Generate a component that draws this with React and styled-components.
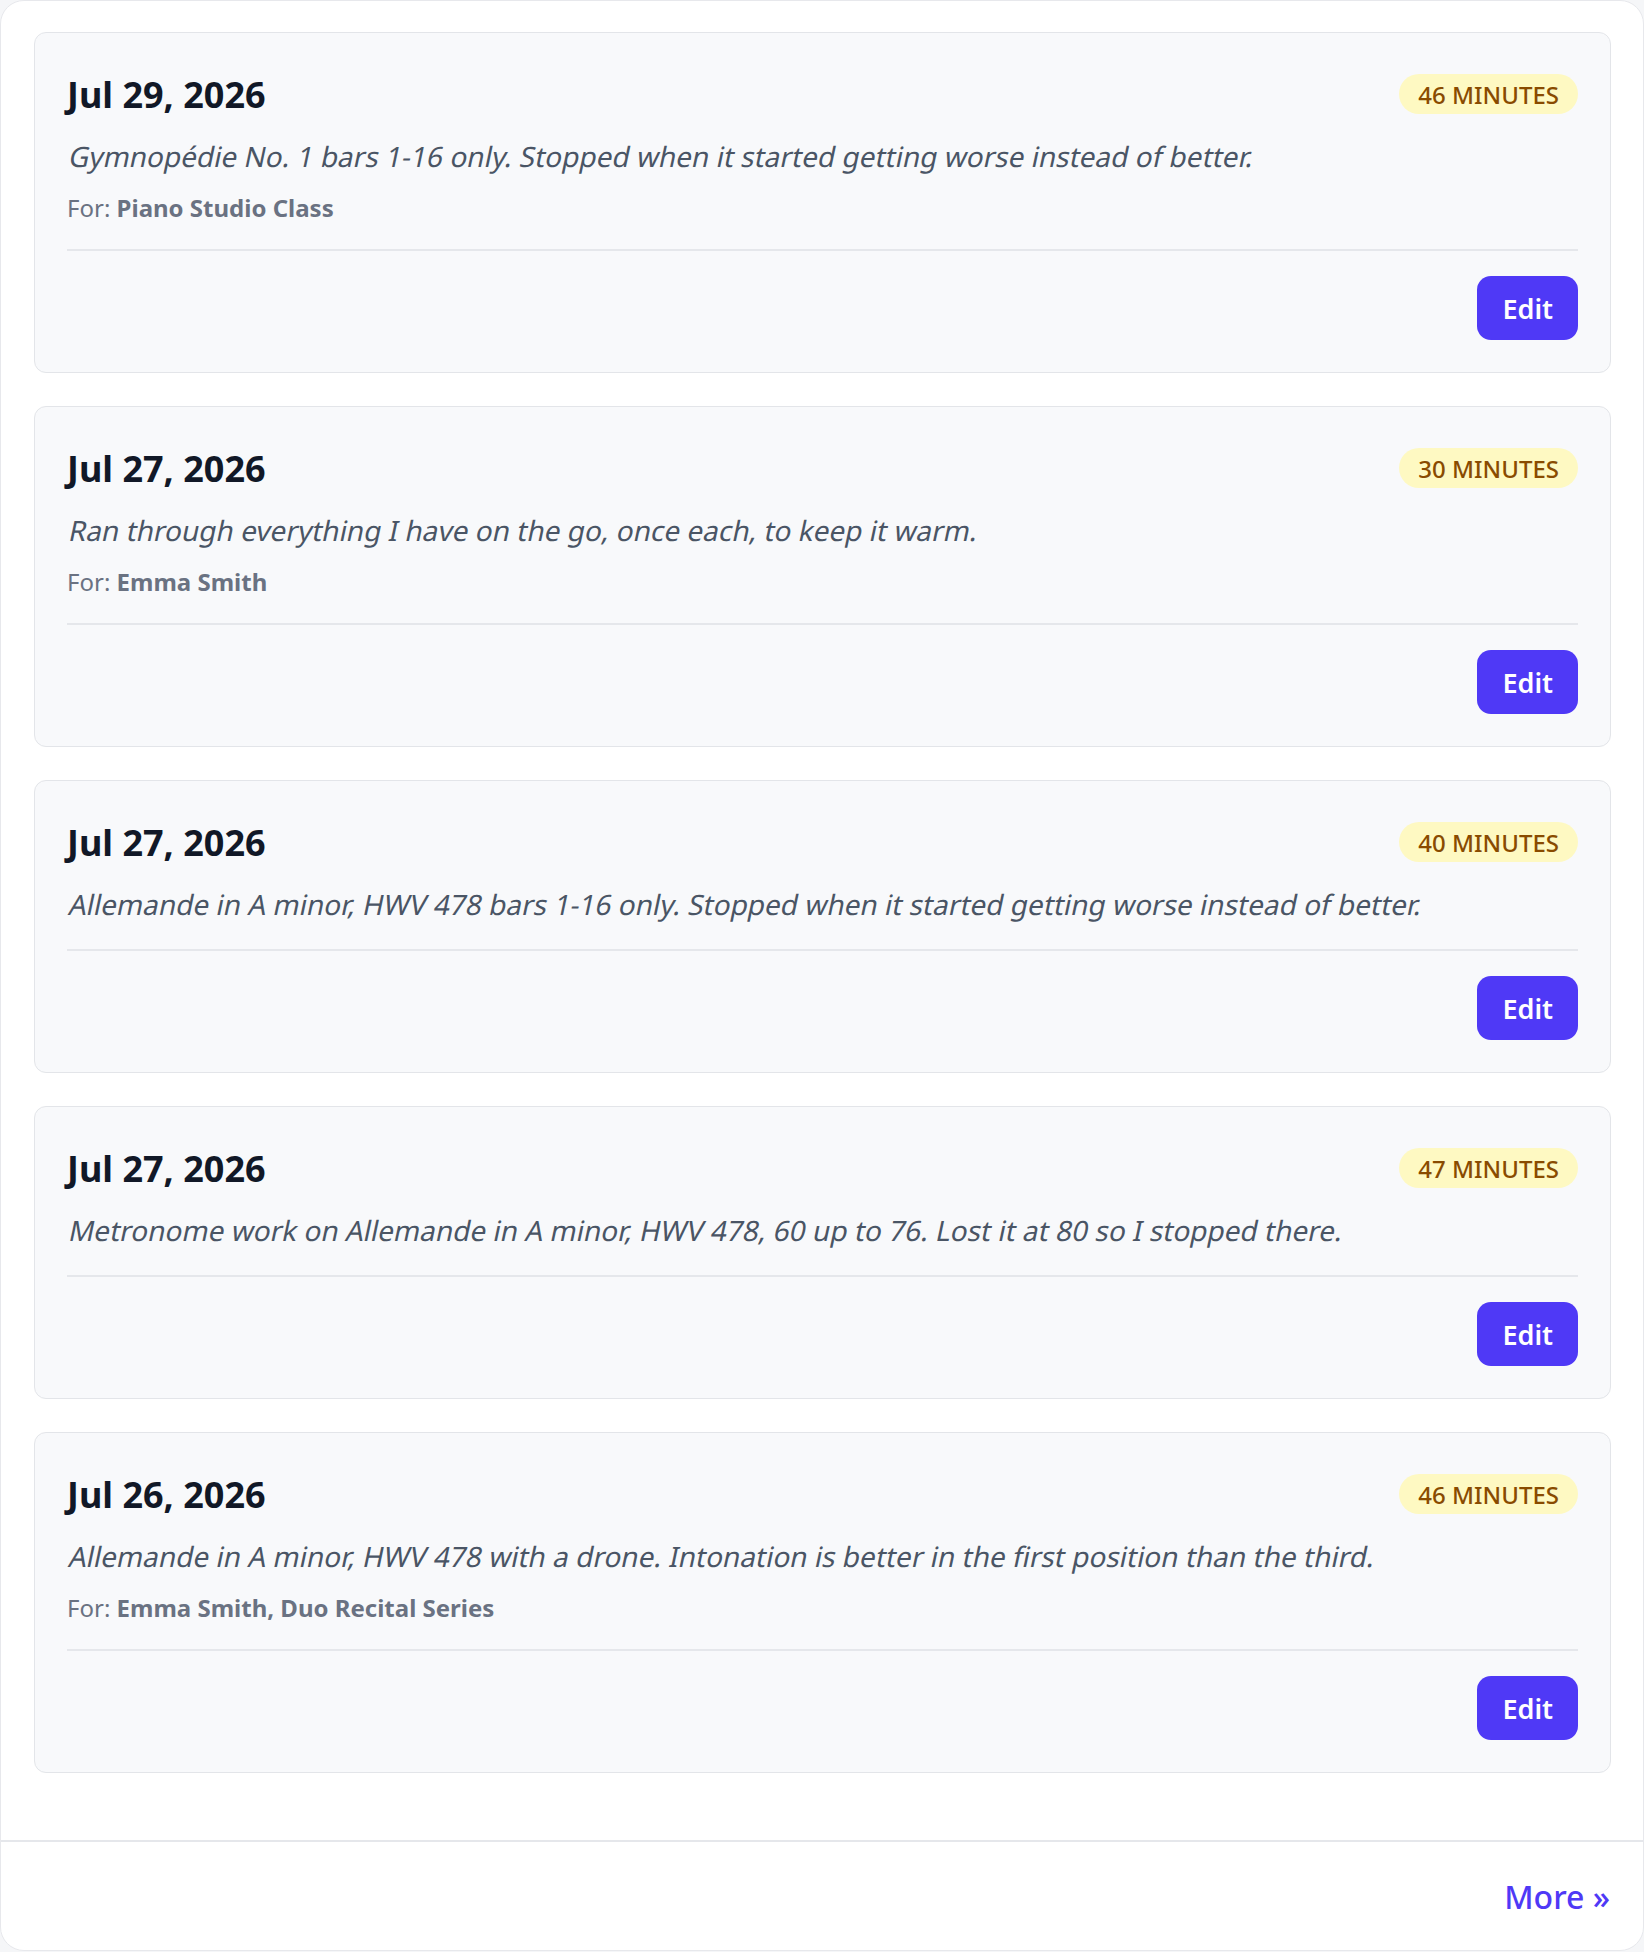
import styled, { createGlobalStyle } from 'styled-components';

const GlobalStyle = createGlobalStyle`
  * {
    box-sizing: border-box;
  }

  body {
    margin: 0;
    background: #f5f6f8;
    font-family: 'Noto Sans', 'Open Sans', sans-serif;
  }
`;

const Panel = styled.section`
  min-height: 1951px;
  background: #fff;
  border: 1px solid #e7e8ec;
  border-radius: 24px;
  display: flex;
  flex-direction: column;
  overflow: hidden;
`;

const List = styled.div`
  padding: 31px 32px 65px 33px;
  display: flex;
  flex-direction: column;
  gap: 33px;
  flex-grow: 1;
`;

const Card = styled.article`
  padding: 32px;
  background: #f8f9fb;
  border: 1px solid #e3e5e9;
  border-radius: 12px;
`;

const Header = styled.div`
  display: flex;
  justify-content: space-between;
  align-items: center;
`;

const Date = styled.h3`
  margin: 0;
  padding-top: 2px;
  font-size: 36px;
  line-height: 56px;
  font-weight: 700;
  color: #111827;
`;

const Badge = styled.span`
  padding: 0 19px;
  height: 40px;
  display: inline-flex;
  align-items: center;
  background: #fef9c2;
  border-radius: 999px;
  font-size: 24px;
  font-weight: 500;
  color: #894b00;
  text-transform: uppercase;
`;

const Note = styled.p`
  margin: 11px 0 0;
  font-size: 28px;
  line-height: 44px;
  color: #4a5565;
`;

// the reference shows a slanted roman face, not the narrower true italic
const Slant = styled.span`
  display: inline-block;
  transform: skewX(-12deg);
  transform-origin: 0 80%;
`;

const For = styled.p`
  margin: 12px 0 0;
  font-size: 24px;
  line-height: 36px;
  color: #6a7282;

  strong {
    font-weight: 700;
  }
`;

const Actions = styled.div`
  margin-top: 23px;
  padding-top: 25px;
  display: flex;
  justify-content: flex-end;
  border-top: 2px solid #e5e7eb;
`;

const EditButton = styled.button`
  padding: 0 25px;
  height: 64px;
  background: #4f39f6;
  border: none;
  border-radius: 14px;
  font-family: inherit;
  font-size: 27px;
  font-weight: 600;
  color: #fff;
  cursor: pointer;
`;

const Footer = styled.div`
  padding: 31px 33px 29px;
  display: flex;
  justify-content: flex-end;
  border-top: 2px solid #e5e7eb;
`;

const More = styled.a`
  font-size: 32px;
  line-height: 48px;
  font-weight: 500;
  color: #4f39f6;
  text-decoration: none;
`;

const sessions = [
  {
    date: 'Jul 29, 2026',
    minutes: 46,
    note: 'Gymnopédie No. 1 bars 1-16 only. Stopped when it started getting worse instead of better.',
    forWho: 'Piano Studio Class',
  },
  {
    date: 'Jul 27, 2026',
    minutes: 30,
    note: 'Ran through everything I have on the go, once each, to keep it warm.',
    forWho: 'Emma Smith',
  },
  {
    date: 'Jul 27, 2026',
    minutes: 40,
    note: 'Allemande in A minor, HWV 478 bars 1-16 only. Stopped when it started getting worse instead of better.',
  },
  {
    date: 'Jul 27, 2026',
    minutes: 47,
    note: 'Metronome work on Allemande in A minor, HWV 478, 60 up to 76. Lost it at 80 so I stopped there.',
  },
  {
    date: 'Jul 26, 2026',
    minutes: 46,
    note: 'Allemande in A minor, HWV 478 with a drone. Intonation is better in the first position than the third.',
    forWho: 'Emma Smith, Duo Recital Series',
  },
];

const Session = ({ date, minutes, note, forWho }) => (
  <Card>
    <Header>
      <Date>{date}</Date>
      <Badge>{minutes} minutes</Badge>
    </Header>
    <Note>
      <Slant>{note}</Slant>
    </Note>
    {forWho && (
      <For>
        For: <strong>{forWho}</strong>
      </For>
    )}
    <Actions>
      <EditButton>Edit</EditButton>
    </Actions>
  </Card>
);

const App = () => (
  <>
    <GlobalStyle />
    <Panel>
      <List>
        {sessions.map((s, i) => (
          <Session key={i} {...s} />
        ))}
      </List>
      <Footer>
        <More href="#">More »</More>
      </Footer>
    </Panel>
  </>
);

export default App;
